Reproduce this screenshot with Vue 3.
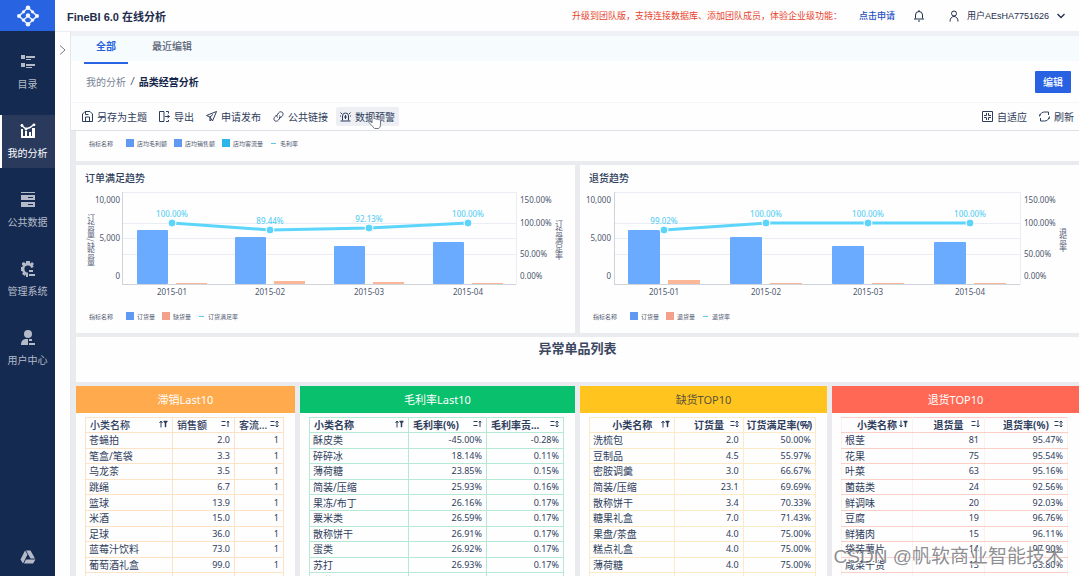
<script setup>
const navItems = [
  { key: 'catalog', label: '目录' },
  { key: 'analysis', label: '我的分析', active: true },
  { key: 'data', label: '公共数据' },
  { key: 'system', label: '管理系统' },
  { key: 'users', label: '用户中心' },
]

const tools = [
  { key: 'save', label: '另存为主题' },
  { key: 'export', label: '导出' },
  { key: 'send', label: '申请发布' },
  { key: 'link', label: '公共链接' },
  { key: 'alert', label: '数据预警', active: true },
]

const topLegend = [
  { label: '店均毛利额', tone: 'blue' },
  { label: '店均销售额', tone: 'blue' },
  { label: '店均客流量', tone: 'cyan' },
  { label: '毛利率', tone: 'dash' },
]

const charts = [
  {
    title: '订单满足趋势',
    leftTitle: '订货量/缺货量',
    rightTitle: '订货满足率',
    left: 46, right: 440, tickEnd: 44, barWidth: 31,
    groups: [
      { month: '2015-01', x: 61, bar: 54, minor: 1, px: 96, py: 32, rate: '100.00%' },
      { month: '2015-02', x: 159, bar: 47, minor: 3, px: 194, py: 39, rate: '89.44%' },
      { month: '2015-03', x: 258, bar: 38, minor: 2, px: 293, py: 37, rate: '92.13%' },
      { month: '2015-04', x: 357, bar: 42, minor: 1, px: 392, py: 32, rate: '100.00%' },
    ],
    legend: [
      { label: '订货量', tone: 'blue' },
      { label: '缺货量', tone: 'salmon' },
      { label: '订货满足率', tone: 'dash' },
    ],
  },
  {
    title: '退货趋势',
    leftTitle: '',
    rightTitle: '退货率',
    left: 34, right: 440, tickEnd: 31, barWidth: 32,
    groups: [
      { month: '2015-01', x: 48, bar: 54, minor: 4, px: 84, py: 39, rate: '99.02%' },
      { month: '2015-02', x: 150, bar: 47, minor: 1, px: 186, py: 32, rate: '100.00%' },
      { month: '2015-03', x: 252, bar: 38, minor: 1, px: 288, py: 32, rate: '100.00%' },
      { month: '2015-04', x: 354, bar: 42, minor: 1, px: 390, py: 32, rate: '100.00%' },
    ],
    legend: [
      { label: '订货量', tone: 'blue' },
      { label: '退货量', tone: 'salmon' },
      { label: '退货率', tone: 'dash' },
    ],
  },
]

const gridLines = [1, 32, 47, 63]
const leftTicks = [
  { text: '10,000', y: 12 },
  { text: '5,000', y: 50 },
  { text: '0', y: 88 },
]
const rightTicks = [
  { text: '150.00%', y: 12 },
  { text: '100.00%', y: 35 },
  { text: '50.00%', y: 66 },
  { text: '0.00%', y: 88 },
]

const tables = [
  {
    title: '滞销Last10', theme: 'orange', widths: [87, 62, 49],
    heads: [['小类名称', 'filter-up'], ['销售额', 'sort-up'], ['客流...', 'sort-both']],
    rows: [
      ['苍蝇拍', '2.0', '1'], ['笔盒/笔袋', '3.3', '1'], ['乌龙茶', '3.5', '1'],
      ['跳绳', '6.7', '1'], ['篮球', '13.9', '1'], ['米酒', '15.0', '1'],
      ['足球', '36.0', '1'], ['蓝莓汁饮料', '73.0', '1'], ['葡萄酒礼盒', '99.0', '1'],
      ['花瓶', '', ''],
    ],
  },
  {
    title: '毛利率Last10', theme: 'green', widths: [99, 78, 77],
    heads: [['小类名称', 'filter-up'], ['毛利率(%)', 'sort-up'], ['毛利率贡...', 'sort-both']],
    rows: [
      ['酥皮类', '-45.00%', '-0.28%'], ['碎碎冰', '18.14%', '0.11%'], ['薄荷糖', '23.85%', '0.15%'],
      ['简装/压缩', '25.93%', '0.16%'], ['果冻/布丁', '26.16%', '0.17%'], ['粟米类', '26.59%', '0.17%'],
      ['散称饼干', '26.91%', '0.17%'], ['蛋类', '26.92%', '0.17%'], ['苏打', '26.93%', '0.17%'],
      ['红薯干类', '', ''],
    ],
  },
  {
    title: '缺货TOP10', theme: 'yellow', widths: [85, 68, 72],
    heads: [['小类名称', 'filter-up'], ['订货量', 'sort-both'], ['订货满足率(%)', 'sort-up']],
    rows: [
      ['洗梳包', '2.0', '50.00%'], ['豆制品', '4.5', '55.97%'], ['密胺调羹', '3.0', '66.67%'],
      ['简装/压缩', '23.1', '69.69%'], ['散称饼干', '3.4', '70.33%'], ['糖果礼盒', '7.0', '71.43%'],
      ['果盘/茶盘', '4.0', '75.00%'], ['糕点礼盒', '4.0', '75.00%'], ['薄荷糖', '4.0', '75.00%'],
      ['芝麻糊', '', ''],
    ],
  },
  {
    title: '退货TOP10', theme: 'red', widths: [71, 72, 83],
    heads: [['小类名称', 'filter-down'], ['退货量', 'sort-down'], ['退货率(%)', 'sort-both']],
    rows: [
      ['根茎', '81', '95.47%'], ['花果', '75', '95.54%'], ['叶菜', '63', '95.16%'],
      ['菌菇类', '24', '92.56%'], ['鲜调味', '20', '92.03%'], ['豆腐', '19', '96.76%'],
      ['鲜猪肉', '15', '96.11%'], ['袋装薯片', '14', '97.90%'], ['咸菜干货', '13', '63.80%'],
      ['冷藏类', '', ''],
    ],
  },
]

const linePoints = (chart) => chart.groups.map((g) => `${g.px},${g.py}`).join(' ')
const share = (w, widths) => `${(w / widths.reduce((a, b) => a + b, 0)) * 100}%`
</script>

<template>
  <div class="app">
    <aside class="sidebar">
      <a class="logo" href="#" aria-label="FineBI">
        <svg width="24" height="22" viewBox="0 0 24 22" fill="none" stroke="#e6eeff" stroke-width="1.600">
          <path d="M12 2.500 21 11 12 19.500 3 11Z" />
          <path d="M12 11 7.500 15M12 11 16.500 15" />
          <g fill="#f2f6ff" stroke="none">
            <circle cx="12" cy="2.800" r="2.300" /><circle cx="21" cy="11" r="2" />
            <circle cx="12" cy="19.200" r="2.300" /><circle cx="3" cy="11" r="2" />
            <circle cx="12" cy="10.500" r="2.200" />
            <circle cx="7.500" cy="6.800" r="1.600" /><circle cx="16.500" cy="6.800" r="1.600" />
            <circle cx="7.500" cy="15.200" r="1.600" /><circle cx="16.500" cy="15.200" r="1.600" />
          </g>
        </svg>
      </a>
      <nav class="nav">
        <a v-for="n in navItems" :key="n.key" href="#" class="nav-item" :class="{ active: n.active }">
          <svg width="16" height="16" viewBox="0 0 16 16" fill="currentColor">
            <template v-if="n.key === 'catalog'">
              <path d="M1 1h4v4H1zM6 2h9v2H6zM6 5h5v1H6zM1 9h4v4H1zM6 10h9v2H6zM6 13h6v1H6z" />
            </template>
            <template v-else-if="n.key === 'analysis'">
              <path d="M1 6h2v7h2V8h2v5h2V9h2v4h1V5h3v10H1z" />
              <path d="M1 2 6 6 10 4.500 14 1.500" fill="none" stroke="currentColor" stroke-width="1.500" />
              <circle cx="2" cy="2.500" r="1.400" /><circle cx="6" cy="6" r="1.400" /><circle cx="14" cy="1.800" r="1.400" />
            </template>
            <template v-else-if="n.key === 'data'">
              <path d="M1 0h14v1H1z" />
              <path fill-rule="evenodd" d="M1 3h14v5H1zM8 5v1h5V5zM1 10h14v5H1zM8 12v1h5v-1z" />
            </template>
            <template v-else-if="n.key === 'system'">
              <path d="M12.500 6.500A4.800 4.800 0 1 0 8 12.800" fill="none" stroke="currentColor" stroke-width="2.600" />
              <path d="M6 0h4v3H6zM1 6h2v4H1zM2 2l2-1 2 2-2 2-2-1zM12 1l2 2-2 2-2-2zM2 13l2-3 2 2-1 3zM6 12h2v4H6zM9 9h4v2H9zM9 13h6v2H9z" />
            </template>
            <template v-else>
              <circle cx="8" cy="4" r="4" />
              <path d="M1 15c0-4 2-6 5-6h2v6zM9 9h3v2H9zM9 13h6v2H9z" />
            </template>
          </svg>
          <span>{{ n.label }}</span>
        </a>
      </nav>
      <a class="nav-foot" href="#" aria-label="更多">
        <svg width="16" height="14" viewBox="0 0 16 14" fill="currentColor">
          <path d="M5 .5 7.500 4.500 3 13.500 .5 9.500zM6 .5h4.500L15 8.500h-4.500zM6 9.500h9.500L13 13.500H4z" />
        </svg>
      </a>
    </aside>

    <div class="main">
      <header class="header">
        <h1>FineBI 6.0 在线分析</h1>
        <p class="notice">升级到团队版，支持连接数据库、添加团队成员，体验企业级功能：</p>
        <a class="apply" href="#">点击申请</a>
        <button class="plain bell" aria-label="通知">
          <svg width="12" height="12" viewBox="0 0 12 12" fill="none" stroke="currentColor">
            <path d="M2.500 8.500V5a3.500 3.500 0 0 1 7 0v3.500M1 9h10M5 11h2M6 0v1.500" />
          </svg>
        </button>
        <button class="plain user">
          <svg width="10" height="12" viewBox="0 0 10 12" fill="none" stroke="currentColor">
            <circle cx="5" cy="3.500" r="2.500" /><path d="M1 11.500C1 8 3 6.500 5 6.500S9 8 9 11.500" />
          </svg>
          <span>用户AEsHA7751626</span>
          <svg width="8" height="6" viewBox="0 0 8 6" fill="none" stroke="currentColor" stroke-width="1.300"><path d="M.5 1 4 4.500 7.500 1" /></svg>
        </button>
      </header>

      <div class="body">
        <div class="gutter">
          <button class="plain" aria-label="展开">
            <svg width="7" height="10" viewBox="0 0 7 10" fill="none" stroke="#737a88"><path d="M1 .5 6 5 1 9.500" /></svg>
          </button>
        </div>
        <main class="content">
          <nav class="tabs">
            <a href="#" class="tab active">全部</a>
            <a href="#" class="tab">最近编辑</a>
          </nav>
          <div class="crumbs">
            <a href="#">我的分析</a><i>/</i><strong>品类经营分析</strong>
            <button class="edit">编辑</button>
          </div>
          <div class="toolbar">
            <button v-for="t in tools" :key="t.key" class="tool" :class="{ active: t.active }">
              <svg width="11" height="11" viewBox="0 0 11 11" fill="none" stroke="currentColor">
                <template v-if="t.key === 'save'"><path d="M.5 3 3 .5h5L10.500 3v7.500H.5zM3.500 10V6h4v4M3.500 1v2.500h3" /></template>
                <template v-else-if="t.key === 'export'"><path d="M5 10.500H.5V.5H5v10M7 .5h2.500v2M7 10.500h2.500V9M6 5.500h4.500M8.500 4l2 1.500-2 1.500" /></template>
                <template v-else-if="t.key === 'send'"><path d="M.5 4.500 10.500.5l-4 9.500-2.500-4zM4 6l3-2.500M4 6v4l1.500-2" /></template>
                <template v-else-if="t.key === 'link'"><path d="M4.500 6.500C3 5 4.500 3.500 5.500 2S8.500.5 9.500 1.500s.5 3-.5 4-2 1.500-3 1M6.500 4.500C8 6 6.500 7.500 5.500 9s-3 1.500-4 .5-.5-3 .5-4 1-1 2-1" /></template>
                <template v-else><path d="M2.500 9.500V5a3 3 0 0 1 6 0v4.500M.5 10h10M5.500 4v4M4 6h3M.5 1.500 2 3M10.500 1.500 9 3M0 5h1M10 5h1" /></template>
              </svg>
              <span>{{ t.label }}</span>
              <svg v-if="t.active" class="pointer" width="16" height="18" viewBox="0 0 16 18" fill="#fff" stroke="#737985">
                <path d="M5 11V2.500c0-1.500 2-1.500 2 0V7c1-1 2-.5 2 .5 1-1 2-.5 2 .5 1-1 2.500-.5 2.500 1V12c0 3-1 4.500-2.500 4.500H7.500L2 10.500c-.5-1.500 1.500-1.500 3 .5z" />
              </svg>
            </button>
            <span class="spacer"></span>
            <button class="tool">
              <svg width="11" height="11" viewBox="0 0 11 11" fill="none" stroke="currentColor"><path d="M.5.5h10v10H.5zM4.500 2v2.500H2M6.500 2v2.500H9M4.500 9V6.500H2M6.500 9V6.500H9" /></svg>
              <span>自适应</span>
            </button>
            <button class="tool">
              <svg width="11" height="11" viewBox="0 0 11 11" fill="none" stroke="currentColor"><path d="M1 4.500C1.500 2 3.500 1 5.500 1H9.500V4M10 6.500C9.500 9 7.500 10 5.500 10H1.500V7M.5 5.500 1 3M10.500 5.500 10 8" /></svg>
              <span>刷新</span>
            </button>
          </div>

          <div class="board">
            <section class="card top-card">
              <div class="legend">
                <span class="legend-title">指标名称</span>
                <span v-for="l in topLegend" :key="l.label" class="key"><i :class="l.tone"></i>{{ l.label }}</span>
              </div>
            </section>

            <div class="charts">
              <section v-for="c in charts" :key="c.title" class="card">
                <h2>{{ c.title }}</h2>
                <svg class="chart" viewBox="0 0 499 108">
                  <g class="grid">
                    <path v-for="y in gridLines" :key="y" :d="`M${c.left} ${y}.5H${c.right}`" />
                    <path :d="`M${c.right}.5 1V93`" />
                  </g>
                  <g class="axis"><path :d="`M${c.left}.5 1V94`" /><path :d="`M${c.left} 93.5H${c.right}`" /></g>
                  <g v-for="g in c.groups" :key="g.month">
                    <rect class="bar" :x="g.x" :y="93 - g.bar" :width="c.barWidth" :height="g.bar" rx="1" />
                    <rect class="minor" :x="g.x + c.barWidth + 8" :y="93 - g.minor" :width="c.barWidth" :height="g.minor" />
                    <text class="tick" :x="g.px" y="104" text-anchor="middle">{{ g.month }}</text>
                  </g>
                  <polyline class="line" :points="linePoints(c)" />
                  <g v-for="g in c.groups" :key="g.rate + g.px">
                    <circle class="dot" :cx="g.px" :cy="g.py" r="4" />
                    <text class="rate" :x="g.px" :y="g.py - 6" text-anchor="middle">{{ g.rate }}</text>
                  </g>
                  <text v-for="t in leftTicks" :key="t.text" class="tick" :x="c.tickEnd" :y="t.y" text-anchor="end">{{ t.text }}</text>
                  <text v-for="t in rightTicks" :key="t.text" class="tick" x="444" :y="t.y">{{ t.text }}</text>
                  <text v-if="c.leftTitle" class="axis-title" x="15" y="49" text-anchor="middle">{{ c.leftTitle }}</text>
                  <text class="axis-title" x="483" y="49" text-anchor="middle">{{ c.rightTitle }}</text>
                </svg>
                <div class="legend">
                  <span class="legend-title">指标名称</span>
                  <span v-for="l in c.legend" :key="l.label" class="key"><i :class="l.tone"></i>{{ l.label }}</span>
                </div>
              </section>
            </div>

            <section class="card list-title"><h2>异常单品列表</h2></section>

            <div class="tables">
              <section v-for="t in tables" :key="t.title" class="card" :class="t.theme">
                <h3>{{ t.title }}</h3>
                <div class="table-wrap">
                  <table>
                    <colgroup><col v-for="(w, i) in t.widths" :key="i" :style="{ width: share(w, t.widths) }" /></colgroup>
                    <thead>
                      <tr>
                        <th v-for="h in t.heads" :key="h[0]">
                          {{ h[0] }}
                          <svg width="9" height="8" viewBox="0 0 9 8" fill="none" stroke="currentColor">
                            <template v-if="h[1].startsWith('filter')">
                              <path v-if="h[1] === 'filter-up'" d="M2 7.500V1M.5 3 2 1l1.500 2" />
                              <path v-else d="M2 .5V7M.5 5 2 7l1.500-2" />
                              <path d="M4.500 1h4L7 3.500V7H6V3.500z" fill="currentColor" stroke-width=".5" />
                            </template>
                            <template v-else>
                              <path d="M.5 1.500h4M.5 5.500h4" />
                              <path v-if="h[1] === 'sort-up'" d="M7 7V1M6 2.500 7 1l1 1.500" />
                              <path v-else-if="h[1] === 'sort-down'" d="M7 0v7M5.500 5.500 7 7l1.500-1.500" />
                              <path v-else d="M7 1v6M5.500 2.500 7 1l1.500 1.500M5.500 5.500 7 7l1.500-1.500" />
                            </template>
                          </svg>
                        </th>
                      </tr>
                    </thead>
                    <tbody>
                      <tr v-for="r in t.rows" :key="r[0]"><td v-for="(v, i) in r" :key="i">{{ v }}</td></tr>
                    </tbody>
                  </table>
                </div>
              </section>
            </div>
          </div>
        </main>
      </div>
    </div>
    <div class="watermark">CSDN @帆软商业智能技术</div>
  </div>
</template>

<style>
body {
  margin: 0;
  overflow: hidden;
}
</style>

<style scoped>
* { box-sizing: border-box; }
.app {
  position: relative;
  display: flex;
  height: 100vh;
  overflow: hidden;
  background: #fefefe;
  color: #2f3d5c;
  font-family: "Liberation Sans", "Noto Sans CJK SC", sans-serif;
  font-size: 10px;
}
a { color: inherit; text-decoration: none; }
svg { display: block; flex: none; }
button { font: inherit; color: inherit; border: 0; cursor: pointer; }
h1, h2, h3, p { margin: 0; }
.plain { padding: 0; background: none; }

.sidebar {
  display: flex;
  flex-direction: column;
  flex: none;
  width: 55px;
  background: #142a50;
  color: #b4bac8;
}
.logo {
  display: flex;
  align-items: center;
  justify-content: center;
  height: 31px;
  background: #2864e2;
}
.nav { display: flex; flex-direction: column; gap: 16px; padding-top: 15px; }
.nav-item {
  display: flex;
  flex-direction: column;
  align-items: center;
  gap: 8px;
  height: 53px;
  padding-top: 8px;
  line-height: 14px;
}
.nav-item.active {
  background: #293a5d;
  color: #fff;
  box-shadow: inset 2px 0 #fff;
}
.nav-foot { display: flex; justify-content: center; margin-top: auto; padding-bottom: 12px; }

.main { display: flex; flex: 1; flex-direction: column; min-width: 0; }
.header {
  display: flex;
  align-items: center;
  flex: none;
  height: 31px;
  padding: 0 14px 0 12px;
  font-size: 9px;
  color: #1f2d4d;
}
.header h1 { margin-right: auto; font-size: 11px; }
.notice { color: #e8422d; }
.apply { margin-left: 17px; color: #1f4fc4; font-weight: 500; }
.bell { margin-left: 18px; }
.user { display: flex; align-items: center; gap: 8px; margin-left: 24px; }

.body { display: flex; flex: 1; min-height: 0; }
.gutter {
  flex: none;
  width: 16px;
  padding: 13px 0 0 4px;
  border-right: 1px solid #e4e7ec;
  border-top: 1px solid #eceef5;
}
.content { display: flex; flex: 1; flex-direction: column; min-width: 0; }
.tabs {
  display: flex;
  gap: 12px;
  flex: none;
  height: 33px;
  padding-left: 13px;
  background: linear-gradient(#f0f1f7 5px, #f6fbfd 5px, #f6fbfd 30px, transparent 30px);
}
.tab { padding: 0 12px; line-height: 31px; font-weight: 500; color: #5b6478; }
.tab.active { color: #2a62dd; font-weight: bold; border-bottom: 2px solid #2a64e4; }
.crumbs {
  display: flex;
  align-items: center;
  flex: none;
  height: 39px;
  padding: 0 8px 3px 15px;
  border-bottom: 1px solid #f5f6f9;
  color: #7b8496;
}
.crumbs i { padding: 0 5px; color: #36415a; }
.crumbs strong { color: #14264a; }
.edit {
  margin-left: auto;
  padding: 0 8px;
  height: 22px;
  border-radius: 1px;
  background: #2861e2;
  color: #fff;
  font-weight: 500;
}
.toolbar {
  display: flex;
  align-items: center;
  gap: 12px;
  flex: none;
  height: 28px;
  padding: 0 5px 0 11px;
  border-bottom: 1px solid #dfe1e8;
}
.tool {
  position: relative;
  display: flex;
  align-items: center;
  gap: 4px;
  height: 19px;
  padding: 0;
  background: none;
}
.tool.active { margin: 0 -4px; padding: 0 4px; background: #edeff5; border-radius: 2px; }
.pointer { position: absolute; left: 31px; top: 5px; }
.spacer { flex: 1; }

.board {
  display: flex;
  flex: 1;
  flex-direction: column;
  gap: 4px;
  min-height: 0;
  padding-left: 5px;
  overflow: hidden;
  background: #e9ebee;
}
.card { flex: none; background: #fefefe; }
.top-card { padding-bottom: 6px; }
.top-card .legend { height: 24px; }
.legend {
  display: flex;
  align-items: center;
  gap: 7px;
  height: 34px;
  padding-left: 13px;
  font-size: 6px;
  color: #4e5870;
}
.legend-title { margin-right: 6px; }
.key { display: flex; align-items: center; gap: 3px; }
.key i { width: 8px; height: 8px; }
.key .blue { background: #5f99f2; }
.key .cyan { background: #2bb5ea; }
.key .salmon { background: #f3a08c; }
.key .dash { width: 5px; height: 1px; margin: 0 1px; background: #5cc8ec; }

.charts { display: grid; grid-template-columns: 1fr 1fr; gap: 5px; flex: none; }
.charts h2 { padding: 2px 0 0 9px; font-size: 10px; font-weight: 500; line-height: 24px; }
.chart { width: 100%; height: auto; font-family: "Noto Sans", "Noto Sans CJK SC", sans-serif; }
.grid { fill: none; stroke: #eaedf3; }
.axis { fill: none; stroke: #cfd3da; }
.bar { fill: #6aabff; }
.minor { fill: #fbb797; }
.line { fill: none; stroke: #5dd5fb; stroke-width: 3; }
.dot { fill: #5dd5fb; stroke: #fefefe; stroke-width: 1; }
.tick { fill: #4d586e; font-size: 8px; }
.rate { fill: #5dd0f5; font-size: 8px; font-weight: 500; }
.axis-title { fill: #566078; font-size: 8px; writing-mode: vertical-rl; text-orientation: mixed; font-family: "Noto Sans CJK SC", sans-serif; }

.list-title { padding-bottom: 21px; text-align: center; }
.list-title h2 { font-size: 13px; line-height: 24px; color: #3b4760; }

.tables {
  display: grid;
  grid-template-columns: 219fr 275fr 247fr 247fr;
  gap: 5px;
  font-family: "Noto Sans", "Noto Sans CJK SC", sans-serif;
}
.tables h3 { font-size: 11px; font-weight: 400; line-height: 27px; text-align: center; color: #fff; }
.table-wrap { padding: 4px 11px 4px 9px; }
table { width: 100%; height: 172px; table-layout: fixed; border-collapse: collapse; }
th, td { padding: 0 4px; border: 1px solid var(--rule); line-height: 14px; white-space: nowrap; }
th { position: relative; padding-right: 0; text-align: left; font-size: 10px; }
th svg { position: absolute; right: 4px; top: 2px; }
td { text-align: right; font-size: 9px; }
td:first-child { text-align: left; font-size: 10px; padding-left: 3px; }
.orange { --rule: #fde3c6; }
.orange h3 { background: #ffaa4d; }
.orange th { font-weight: 500; }
.green { --rule: #b5e9d6; }
.green h3 { background: #09c06d; }
.yellow { --rule: #fdebc8; }
.yellow h3 { background: #ffc51e; color: #5c523c; }
.red { --rule: #fbcfc6; }
.red h3 { background: #ff6854; }
.red td, .red th { border-left-color: #fdf0ee; border-right-color: #fdf0ee; }
.yellow th, .red th { padding: 0; text-align: center; }
.red td:nth-child(2) { padding-right: 5px; }

.watermark {
  position: absolute;
  right: 15px;
  bottom: 5px;
  color: rgba(105, 105, 110, 0.75);
  font-size: 19px;
  line-height: 28px;
  text-shadow: 1px 1px #fff;
  white-space: nowrap;
}
</style>
